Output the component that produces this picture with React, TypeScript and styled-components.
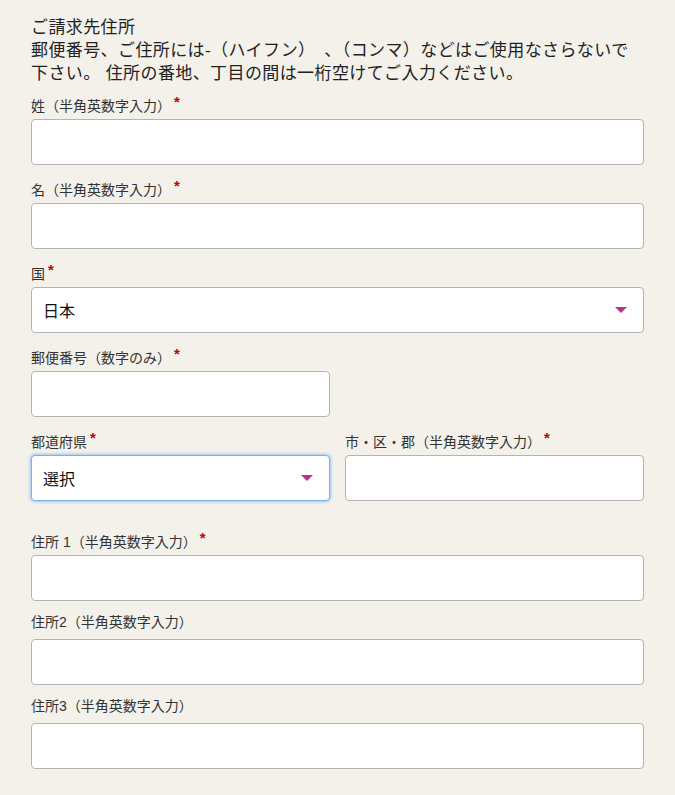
import React from 'react';
import styled, { createGlobalStyle } from 'styled-components';

const GlobalStyle = createGlobalStyle`
  html, body { margin: 0; padding: 0; background: #f4f1ea; }
  body { font-family: "Liberation Sans", "Noto Sans CJK JP", sans-serif; color: #222; }
`;

const Page = styled.div`
  padding: 16px 31px 20px 31px;
  width: 613px;
`;

const Intro = styled.div`
  font-size: 17px;
  line-height: 23px;
  letter-spacing: 0.4px;
  margin-bottom: 8px;
`;

const Field = styled.div<{ $extraTop?: boolean; $last?: boolean }>`
  margin-bottom: ${(p) => (p.$last ? '0' : '12px')};
  margin-top: ${(p) => (p.$extraTop ? '28px' : '0')};
  flex: 1;
`;

const Label = styled.div`
  font-size: 14px;
  line-height: 18px;
  height: 18px;
  color: #333;
  margin-bottom: 8px;
`;

const Star = styled.span`
  color: #c4000c;
  font-size: 15px;
  font-weight: bold;
  vertical-align: 4px;
  margin-left: 3px;
`;

const Input = styled.div<{ $half?: boolean; $focus?: boolean }>`
  box-sizing: border-box;
  height: 46px;
  width: ${(p) => (p.$half ? '299px' : '100%')};
  background: #fff;
  border: 1px solid ${(p) => (p.$focus ? '#7fb0e8' : '#b4b4b4')};
  box-shadow: ${(p) => (p.$focus ? '0 0 3px 1px #9cc3f0' : 'none')};
  border-radius: 4px;
  display: flex;
  align-items: center;
  justify-content: space-between;
  padding: 0 16px 0 11px;
  font-size: 16px;
  color: #111;
`;

const Caret = styled.span`
  width: 0;
  height: 0;
  border-left: 6px solid transparent;
  border-right: 6px solid transparent;
  border-top: 6px solid #b8338e;
`;

const Row = styled.div`
  display: flex;
  gap: 15px;
`;

const LabelText = ({ text, req }: { text: string; req?: boolean }) => (
  <Label>
    {text}
    {req && <Star>*</Star>}
  </Label>
);

export default function App() {
  return (
    <>
      <GlobalStyle />
      <Page>
        <Intro>
          ご請求先住所
          <br />
          郵便番号、ご住所には-（ハイフン）　、（コンマ）などはご使用なさらないで下さい。 住所の番地、丁目の間は一桁空けてご入力ください。
        </Intro>
        <Field>
          <LabelText text="姓（半角英数字入力）" req />
          <Input />
        </Field>
        <Field>
          <LabelText text="名（半角英数字入力）" req />
          <Input />
        </Field>
        <Field>
          <LabelText text="国" req />
          <Input>
            日本
            <Caret />
          </Input>
        </Field>
        <Field>
          <LabelText text="郵便番号（数字のみ）" req />
          <Input $half />
        </Field>
        <Row>
          <Field $last>
            <LabelText text="都道府県" req />
            <Input $focus>
              選択
              <Caret />
            </Input>
          </Field>
          <Field $last>
            <LabelText text="市・区・郡（半角英数字入力）" req />
            <Input />
          </Field>
        </Row>
        <Field $extraTop>
          <LabelText text="住所 1（半角英数字入力）" req />
          <Input />
        </Field>
        <Field>
          <LabelText text="住所2（半角英数字入力）" />
          <Input />
        </Field>
        <Field>
          <LabelText text="住所3（半角英数字入力）" />
          <Input />
        </Field>
      </Page>
    </>
  );
}
